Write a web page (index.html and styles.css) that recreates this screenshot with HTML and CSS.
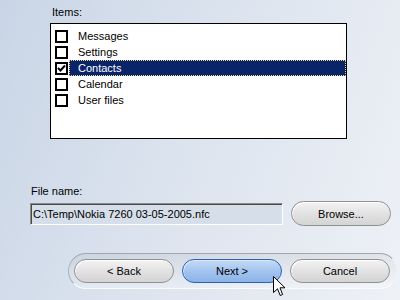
FILE: index.html
```html
<!DOCTYPE html>
<html lang="en">
<head>
    <meta charset="UTF-8">
    <title>Backup - Select items</title>
    <link rel="stylesheet" href="styles.css">
</head>
<body>
    <div class="page">
        <div class="items-label">Items:</div>
        <div class="list">
            <div class="row"><span class="box"></span><span class="text">Messages</span></div>
            <div class="row"><span class="box"></span><span class="text">Settings</span></div>
            <div class="row selected">
                <span class="box">
                    <svg width="9" height="9" viewBox="0 0 9 9"><path d="M1 4 L3.5 6.5 L8 1.5" fill="none" stroke="#000" stroke-width="2"/></svg>
                </span>
                <span class="text">Contacts</span>
            </div>
            <div class="row"><span class="box"></span><span class="text">Calendar</span></div>
            <div class="row"><span class="box"></span><span class="text">User files</span></div>
        </div>

        <div class="file-label">File name:</div>
        <div class="file-row">
            <div class="field">C:\Temp\Nokia 7260 03-05-2005.nfc</div>
            <button class="btn">Browse...</button>
        </div>

        <div class="nav">
            <button class="btn">&lt; Back</button>
            <button class="btn primary">Next &gt;</button>
            <button class="btn">Cancel</button>
        </div>
    </div>
    <!-- mouse pointer over the Next button -->
    <svg class="cursor" width="13" height="21" viewBox="0 0 13 21">
        <path d="M0.5 0.5 L0.5 16.5 L4.5 12.8 L7.2 19.5 L9.6 18.5 L7 11.8 L12 11.8 Z" fill="#fff" stroke="#000" stroke-width="1"/>
    </svg>
</body>
</html>
```

FILE: styles.css
```css
body {
    margin: 0;
    width: 400px;
    height: 300px;
    overflow: hidden;
    position: relative;
    font-family: "Liberation Sans", Arial, sans-serif;
    font-size: 11px;
    color: #000;
    background: linear-gradient(110deg, #c9d5e6 0%, #dbe3ee 45%, #eef1f6 100%);
}
.page {
    padding-top: 6px;
}
.items-label {
    margin-left: 52px;
    height: 13px;
    line-height: 13px;
}
.list {
    margin: 4px 0 0 50px;
    width: 297px;
    height: 116px;
    box-sizing: border-box;
    border: 1px solid #000;
    background-color: #fff;
    padding-top: 4px;
}
.row {
    display: flex;
    align-items: center;
    height: 16px;
    padding-left: 4px;
}
.box {
    width: 13px;
    height: 13px;
    box-sizing: border-box;
    border: 2px solid #000;
    background-color: #fff;
    margin-right: 1px;
    display: flex;
    align-items: center;
    justify-content: center;
}
.text {
    flex: 1;
    height: 16px;
    line-height: 16px;
    padding-left: 9px;
}
.selected .text {
    background-color: #0a246a;
    color: #fff;
    outline: 1px dotted #f0d27e;
    outline-offset: -1px;
}
.file-label {
    margin: 46px 0 0 31px;
    height: 13px;
    line-height: 13px;
}
.file-row {
    display: flex;
    align-items: center;
    gap: 8px;
    margin: 3px 0 0 30px;
    height: 25px;
}
.field {
    width: 253px;
    height: 22px;
    box-sizing: border-box;
    border: 1px solid;
    border-color: #8a8a8a #ffffff #ffffff #8a8a8a;
    box-shadow: inset 1px 1px 0 #4a4a4a;
    background-color: #d5dee9;
    padding-left: 2px;
    line-height: 20px;
    white-space: nowrap;
}
.btn {
    width: 100px;
    height: 25px;
    padding: 0;
    border: 1px solid #909090;
    border-radius: 13px;
    background: linear-gradient(#f3f3f3, #e2e2e2 50%, #d4d4d4);
    box-shadow: inset 1px 1px 0 #ffffff;
    font-family: inherit;
    font-size: 11px;
    color: #000;
}
.btn.primary {
    border-color: #2a62b4;
    background: linear-gradient(#c4daf6, #a3c4ee 50%, #8cb3e9);
    box-shadow: inset 1px 1px 0 #dbe8fa;
}
.nav {
    display: flex;
    gap: 8px;
    margin: 27px 0 0 68px;
    width: 330px;
    height: 36px;
    box-sizing: border-box;
    padding: 5px 0 5px 5px;
    border: 1px solid;
    border-color: #a3a7ad #f2f4f7 #fafbfc #aeb2b8;
    border-radius: 18px;
    background: linear-gradient(rgba(0, 0, 0, 0.05), rgba(255, 255, 255, 0.3));
}
.nav .btn {
    height: 24px;
    border-radius: 12px;
}
.cursor {
    position: absolute;
    left: 273px;
    top: 276px;
}
```
